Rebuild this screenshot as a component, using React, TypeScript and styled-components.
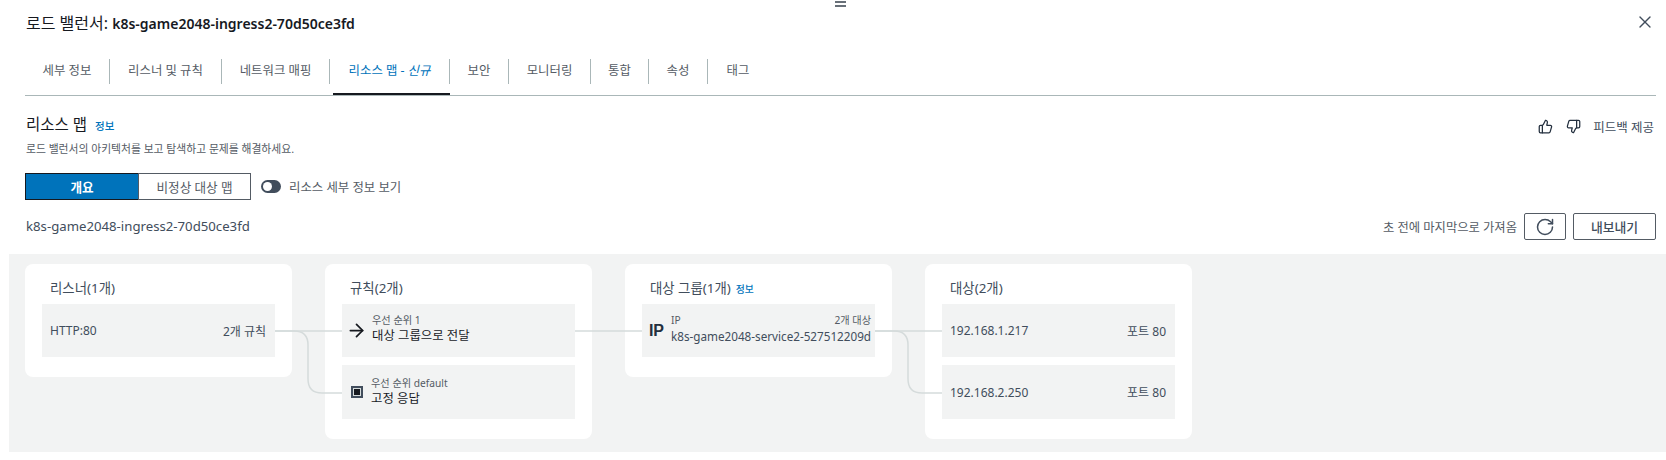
import React from "react";
import styled, { createGlobalStyle } from "styled-components";
import { X, ThumbsUp, ThumbsDown, RotateCw, ArrowRight } from "lucide-react";

const Global = createGlobalStyle`
  html, body { margin: 0; padding: 0; background: #fff; }
  body { font-family: "Noto Sans", "Noto Sans CJK KR", sans-serif; color: #16191f; overflow: hidden; }
  * { box-sizing: border-box; }
`;

const Page = styled.div`
  position: relative;
  width: 1666px;
  height: 460px;
`;

const Handle = styled.div`
  position: absolute;
  top: 1px;
  left: 835px;
  width: 11px;
  height: 6px;
  border-top: 2px solid #687078;
  border-bottom: 2px solid #687078;
`;

const Header = styled.header`
  height: 44px;
  padding: 0 11px 0 26px;
  display: flex;
  align-items: center;
  justify-content: space-between;
`;

const PanelTitle = styled.h1`
  margin: 0;
  font-size: 16px;
  font-weight: 400;
  color: #16191f;
`;

const PanelName = styled.span`
  font-size: 14px;
  font-weight: 600;
`;

const CloseButton = styled.span`
  display: flex;
  color: #414d5c;
`;

const TabBar = styled.nav`
  display: flex;
  margin: 15px 10px 0 25px;
  height: 37px;
  border-bottom: 1px solid #aab7b8;
`;

const Tab = styled.div<{ $w: number; $active?: boolean; $last?: boolean }>`
  position: relative;
  width: ${(p) => p.$w}px;
  height: 25px;
  padding-bottom: 3px;
  display: flex;
  align-items: center;
  justify-content: center;
  font-size: 12.4px;
  white-space: nowrap;
  color: ${(p) => (p.$active ? "#0073bb" : "#545b64")};
  border-right: ${(p) => (p.$last ? "none" : "1px solid #aab7b8")};
  &::after {
    content: "";
    display: ${(p) => (p.$active ? "block" : "none")};
    position: absolute;
    left: 3px;
    right: -1px;
    top: 34px;
    height: 2px;
    background: #16191f;
  }
  em { font-style: italic; margin-left: 3px; }
`;

const Content = styled.main`
  padding: 0 10px 0 25px;
`;

const SectionHead = styled.section`
  padding-top: 18px;
  display: flex;
  justify-content: space-between;
  align-items: flex-start;
`;

const SectionTitle = styled.h2`
  margin: 0;
  height: 20px;
  padding-left: 1px;
  font-size: 15.5px;
  line-height: 20px;
  font-weight: 400;
  color: #16191f;
`;

const InfoLink = styled.a`
  color: #0073bb;
  font-size: 10.5px;
  font-weight: 500;
  margin-left: 8px;
`;

const Description = styled.p`
  margin: 6px 0 0;
  height: 18px;
  padding-left: 1px;
  font-size: 10.8px;
  line-height: 18px;
  color: #545b64;
`;

const Feedback = styled.div`
  display: flex;
  align-items: center;
  height: 24px;
  color: #232f3e;
  gap: 13px;
`;

const FeedbackLabel = styled.span`
  font-size: 12.5px;
  color: #414d5c;
  margin-left: -1px;
  margin-right: 2px;
`;

const Controls = styled.div`
  display: flex;
  align-items: center;
  margin-top: 15px;
  height: 27px;
`;

const Segment = styled.div<{ $w: number; $on?: boolean }>`
  width: ${(p) => p.$w}px;
  height: 27px;
  display: flex;
  align-items: center;
  justify-content: center;
  font-size: 12.6px;
  font-weight: ${(p) => (p.$on ? 700 : 400)};
  background: ${(p) => (p.$on ? "#0073bb" : "#fff")};
  color: ${(p) => (p.$on ? "#fff" : "#545b64")};
  border: 1px solid #545b64;
  border-right: ${(p) => (p.$on ? "none" : "1px solid #545b64")};
  border-color: ${(p) => (p.$on ? "#16191f" : "#545b64")};
`;

const Toggle = styled.span`
  position: relative;
  width: 20px;
  height: 13px;
  border-radius: 7px;
  margin-left: 10px;
  background: #414d5c;
  &::after {
    content: "";
    position: absolute;
    left: 2px;
    top: 2px;
    width: 9px;
    height: 9px;
    border-radius: 50%;
    background: #fff;
  }
`;

const ToggleLabel = styled.span`
  margin-left: 8px;
  font-size: 12.4px;
  color: #545b64;
`;

const NameRow = styled.div`
  display: flex;
  align-items: center;
  justify-content: space-between;
  margin-top: 13px;
  height: 27px;
`;

const MapName = styled.div`
  padding: 0 0 2px 1px;
  font-size: 13.2px;
  color: #414d5c;
`;

const Actions = styled.div`
  display: flex;
  align-items: center;
`;

const Fetched = styled.span`
  font-size: 12.3px;
  color: #545b64;
  margin-right: 7px;
`;

const ActionButton = styled.button<{ $w: number }>`
  width: ${(p) => p.$w}px;
  height: 27px;
  margin-right: ${(p) => (p.$w < 50 ? "7px" : "0")};
  display: flex;
  align-items: center;
  justify-content: center;
  padding: 0;
  background: #fff;
  border: 1px solid #545b64;
  border-radius: 2px;
  font: 500 12.8px "Noto Sans", "Noto Sans CJK KR", sans-serif;
  color: #414d5c;
`;

const Canvas = styled.section`
  position: relative;
  margin: 14px 0 0 9px;
  height: 198px;
  padding: 10px 0 0 16px;
  background: #f2f3f3;
  display: flex;
  align-items: flex-start;
  gap: 33px;
`;

const Wires = styled.svg`
  position: absolute;
  left: 0;
  top: 0;
  pointer-events: none;
`;

const Card = styled.div`
  width: 267px;
  padding: 0 17px 20px;
  background: #fff;
  border-radius: 8px;
`;

const CardTitle = styled.h3`
  margin: 0;
  height: 40px;
  padding: 14px 0 6px 8px;
  font-size: 13.4px;
  line-height: 20px;
  font-weight: 400;
  color: #414d5c;
  ${InfoLink} { margin-left: 5px; font-size: 9.8px; }
`;

const Rows = styled.div`
  display: flex;
  flex-direction: column;
  gap: 8px;
`;

const Row = styled.div<{ $pr?: number }>`
  height: 53px;
  background: #f2f3f3;
  display: flex;
  align-items: center;
  justify-content: space-between;
  padding: 0 ${(p) => p.$pr ?? 9}px 0 8px;
  font-size: 12px;
  color: #414d5c;
  & + & { height: 54px; }
`;

const RichRow = styled(Row)`
  justify-content: flex-start;
  gap: 8px;
`;

const RowText = styled.div<{ $nudge?: boolean }>`
  flex: 1;
  min-width: 0;
  align-self: flex-start;
  padding-top: ${(p) => (p.$nudge ? 11 : 9)}px;
`;

const SmallLine = styled.div`
  display: flex;
  justify-content: space-between;
  height: 14px;
  font-size: 10.2px;
  line-height: 14px;
  color: #545b64;
`;

const MainLine = styled.div<{ $latin?: boolean }>`
  height: 18px;
  font-size: ${(p) => (p.$latin ? "11.7px" : "12.4px")};
  line-height: 18px;
  color: ${(p) => (p.$latin ? "#414d5c" : "#16191f")};
  white-space: nowrap;
`;

const ForwardArrow = styled(ArrowRight)`
  flex: none;
  margin: 0 -3px 0 -4px;
  color: #16191f;
`;

const StopIcon = styled.span`
  flex: none;
  width: 12px;
  height: 12px;
  margin-left: 1px;
  border: 2px solid #414d5c;
  background: #16191f;
  box-shadow: inset 0 0 0 1px #d5dbdb;
`;

const IpBadge = styled.span`
  flex: none;
  width: 15px;
  margin: 0 -1px 0 -1px;
  font-size: 16px;
  font-weight: 700;
  letter-spacing: -0.3px;
  color: #232f3e;
  font-family: "Liberation Sans", sans-serif;
`;

const Port = styled.span`
  color: #414d5c;
`;

function Connector({ y0, x0, x1, vx }: { y0: number; x0: number; x1: number; vx: number }) {
  return (
    <path
      d={`M${x0} ${y0} H${vx - 14} Q${vx} ${y0} ${vx} ${y0 + 14} V${y0 + 48} Q${vx} ${y0 + 62} ${vx + 14} ${y0 + 62} H${x1}`}
      fill="none"
      stroke="#d5dbdb"
      strokeWidth="1.5"
    />
  );
}

export default function App() {
  return (
    <Page>
      <Global />
      <Handle />
      <Header>
        <PanelTitle>로드 밸런서: <PanelName>k8s-game2048-ingress2-70d50ce3fd</PanelName></PanelTitle>
        <CloseButton><X size={20} strokeWidth={1.6} /></CloseButton>
      </Header>
      <TabBar>
        <Tab $w={85}>세부 정보</Tab>
        <Tab $w={112}>리스너 및 규칙</Tab>
        <Tab $w={108}>네트워크 매핑</Tab>
        <Tab $w={120} $active>리소스 맵 -<em>신규</em></Tab>
        <Tab $w={59}>보안</Tab>
        <Tab $w={82}>모니터링</Tab>
        <Tab $w={58}>통합</Tab>
        <Tab $w={59}>속성</Tab>
        <Tab $w={60} $last>태그</Tab>
      </TabBar>
      <Content>
        <SectionHead>
          <div>
            <SectionTitle>리소스 맵<InfoLink>정보</InfoLink></SectionTitle>
            <Description>로드 밸런서의 아키텍처를 보고 탐색하고 문제를 해결하세요.</Description>
          </div>
          <Feedback>
            <ThumbsUp size={15} strokeWidth={2} />
            <ThumbsDown size={15} strokeWidth={2} />
            <FeedbackLabel>피드백 제공</FeedbackLabel>
          </Feedback>
        </SectionHead>
        <Controls>
          <Segment $w={113} $on>개요</Segment>
          <Segment $w={113}>비정상 대상 맵</Segment>
          <Toggle />
          <ToggleLabel>리소스 세부 정보 보기</ToggleLabel>
        </Controls>
        <NameRow>
          <MapName>k8s-game2048-ingress2-70d50ce3fd</MapName>
          <Actions>
            <Fetched>초 전에 마지막으로 가져옴</Fetched>
            <ActionButton $w={42}><RotateCw size={20} strokeWidth={1.8} /></ActionButton>
            <ActionButton $w={83}>내보내기</ActionButton>
          </Actions>
        </NameRow>
      </Content>
      <Canvas>
        <Card>
          <CardTitle>리스너(1개)</CardTitle>
          <Rows>
            <Row><span>HTTP:80</span><span>2개 규칙</span></Row>
          </Rows>
        </Card>
        <Card>
          <CardTitle>규칙(2개)</CardTitle>
          <Rows>
            <RichRow>
              <ForwardArrow size={21} strokeWidth={2} />
              <RowText>
                <SmallLine>우선 순위 1</SmallLine>
                <MainLine>대상 그룹으로 전달</MainLine>
              </RowText>
            </RichRow>
            <RichRow>
              <StopIcon />
              <RowText $nudge>
                <SmallLine>우선 순위 default</SmallLine>
                <MainLine>고정 응답</MainLine>
              </RowText>
            </RichRow>
          </Rows>
        </Card>
        <Card>
          <CardTitle>대상 그룹(1개)<InfoLink>정보</InfoLink></CardTitle>
          <Rows>
            <RichRow $pr={4}>
              <IpBadge>IP</IpBadge>
              <RowText>
                <SmallLine><span>IP</span><span>2개 대상</span></SmallLine>
                <MainLine $latin>k8s-game2048-service2-527512209d</MainLine>
              </RowText>
            </RichRow>
          </Rows>
        </Card>
        <Card>
          <CardTitle>대상(2개)</CardTitle>
          <Rows>
            <Row><span>192.168.1.217</span><Port>포트 80</Port></Row>
            <Row><span>192.168.2.250</span><Port>포트 80</Port></Row>
          </Rows>
        </Card>
        <Wires width="1657" height="198" viewBox="0 0 1657 198">
          <Connector x0={266} x1={333} vx={299} y0={77} />
          <path d="M266 77 H333 M566 77 H633 M866 77 H933" fill="none" stroke="#d5dbdb" strokeWidth="1.5" />
          <Connector x0={866} x1={933} vx={899} y0={77} />
        </Wires>
      </Canvas>
    </Page>
  );
}
